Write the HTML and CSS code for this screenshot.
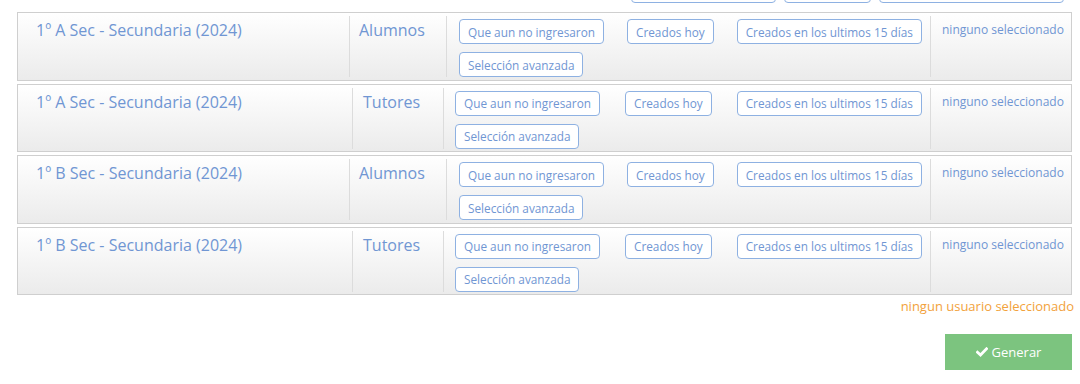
FILE: index.html
```html
<!doctype html>
<html lang="es">
<head>
    <meta charset="UTF-8">
    <meta name="viewport" content="width=device-width, initial-scale=1.0">
    <title>Seleccion de usuarios</title>
    <link rel="stylesheet" href="styles.css">
</head>
<body>
    <div class="wrapper">
        <div class="bulk">
            <button type="button" class="btn">Que aun no ingresaron</button>
            <button type="button" class="btn">Creados hoy</button>
            <button type="button" class="btn">Creados en los ultimos 15 días</button>
        </div>

        <div class="list">
            <div class="row">
                <div class="cell course">1º A Sec - Secundaria (2024)</div>
                <div class="cell kind">Alumnos</div>
                <div class="cell actions">
                    <button type="button" class="btn">Que aun no ingresaron</button>
                    <button type="button" class="btn">Creados hoy</button>
                    <button type="button" class="btn">Creados en los ultimos 15 días</button>
                    <button type="button" class="btn">Selección avanzada</button>
                </div>
                <div class="cell status">ninguno seleccionado</div>
            </div>
            <div class="row tutors">
                <div class="cell course">1º A Sec - Secundaria (2024)</div>
                <div class="cell kind">Tutores</div>
                <div class="cell actions">
                    <button type="button" class="btn">Que aun no ingresaron</button>
                    <button type="button" class="btn">Creados hoy</button>
                    <button type="button" class="btn">Creados en los ultimos 15 días</button>
                    <button type="button" class="btn">Selección avanzada</button>
                </div>
                <div class="cell status">ninguno seleccionado</div>
            </div>
            <div class="row">
                <div class="cell course">1º B Sec - Secundaria (2024)</div>
                <div class="cell kind">Alumnos</div>
                <div class="cell actions">
                    <button type="button" class="btn">Que aun no ingresaron</button>
                    <button type="button" class="btn">Creados hoy</button>
                    <button type="button" class="btn">Creados en los ultimos 15 días</button>
                    <button type="button" class="btn">Selección avanzada</button>
                </div>
                <div class="cell status">ninguno seleccionado</div>
            </div>
            <div class="row tutors">
                <div class="cell course">1º B Sec - Secundaria (2024)</div>
                <div class="cell kind">Tutores</div>
                <div class="cell actions">
                    <button type="button" class="btn">Que aun no ingresaron</button>
                    <button type="button" class="btn">Creados hoy</button>
                    <button type="button" class="btn">Creados en los ultimos 15 días</button>
                    <button type="button" class="btn">Selección avanzada</button>
                </div>
                <div class="cell status">ninguno seleccionado</div>
            </div>
        </div>

        <div class="summary">ningun usuario seleccionado</div>

        <div class="footer">
            <button type="button" class="generate">
                <svg width="12" height="10" viewBox="0 0 12 10">
                    <polyline points="1.5,5.2 4.5,8 10.5,1.8" fill="none" stroke="#fff" stroke-width="2.8" stroke-linecap="square"/>
                </svg>
                Generar
            </button>
        </div>
    </div>
</body>
</html>
```

FILE: styles.css
```css
body {
    margin: 0;
    background: #fff;
    font-family: "Open Sans", "Liberation Sans", sans-serif;
}

.wrapper {
    padding: 0 8px 0 17px;
}

.btn {
    height: 25px;
    padding: 0 8px;
    font-family: "Open Sans", "Liberation Sans", sans-serif;
    font-size: 11.8px;
    color: #7096d3;
    background: #fff;
    border: 1px solid #8eb1e2;
    border-radius: 4px;
    white-space: nowrap;
    cursor: pointer;
}

/* buttons of the block above, only their bottom edge is visible */
.bulk {
    height: 3px;
    overflow: hidden;
    display: flex;
    justify-content: flex-end;
    align-items: flex-end;
    gap: 8px;
    padding-right: 8px;
}

.bulk .btn {
    flex: none;
}

.list {
    margin-top: 9px;
    display: flex;
    flex-direction: column;
    gap: 3px;
}

.row {
    display: flex;
    padding: 3px 0 2.5px 0;
    border: 1px solid #cfcfcf;
    background: linear-gradient(#ffffff, #ebebeb);
}

.row .cell {
    padding-top: 3px;
    color: #7096d3;
}

.row .cell + .cell {
    border-left: 1px solid #dcdcdc;
}

.row .course {
    width: 313px;
    padding-left: 18px;
    font-size: 16px;
    line-height: 22px;
}

.row .kind {
    width: 87px;
    padding-left: 9px;
    font-size: 16px;
    line-height: 22px;
}

.row .actions {
    width: 471px;
    padding-left: 12px;
    display: flex;
    flex-wrap: wrap;
    column-gap: 23px;
    row-gap: 8px;
    align-content: flex-start;
}

.row .status {
    flex: 1;
    padding-left: 11px;
    font-size: 12px;
    line-height: 22px;
}

.row.tutors .course {
    width: 316px;
}

.row.tutors .kind {
    width: 80px;
    padding-left: 10px;
}

.row.tutors .actions {
    width: 475px;
    padding-left: 11px;
    column-gap: 25px;
}

.summary {
    margin-top: 2px;
    margin-right: -2px;
    text-align: right;
    font-size: 13px;
    line-height: 18px;
    color: #f2a23b;
}

.footer {
    margin-top: 19px;
    display: flex;
    justify-content: flex-end;
}

.generate {
    width: 127px;
    height: 36px;
    display: flex;
    align-items: center;
    justify-content: center;
    gap: 4px;
    font-family: "Open Sans", "Liberation Sans", sans-serif;
    font-size: 13px;
    color: #fff;
    background: #7cc47f;
    border: none;
    cursor: pointer;
}
```
